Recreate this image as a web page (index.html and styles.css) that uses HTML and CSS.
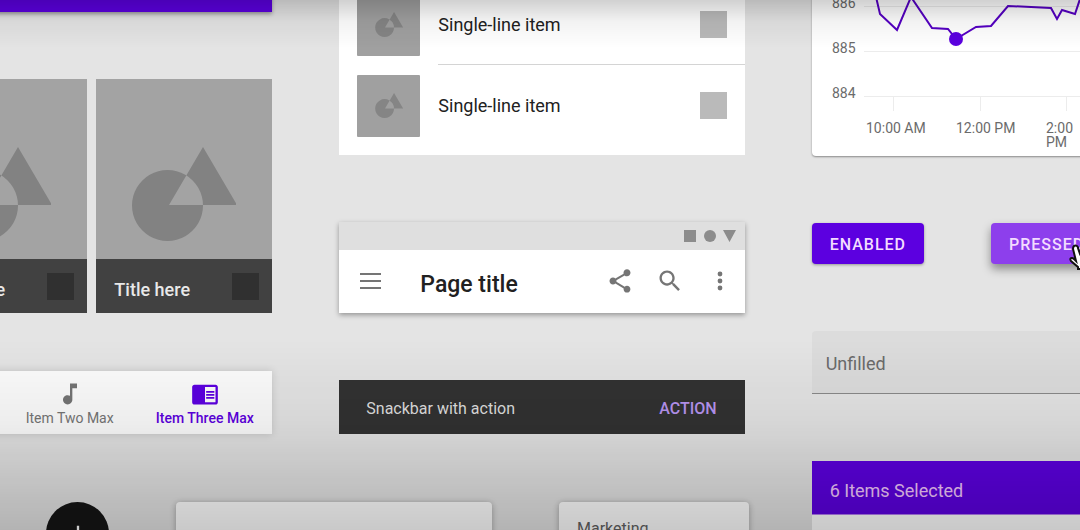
FILE: index.html
```html
<!DOCTYPE html>
<html lang="en">
<head>
  <meta charset="UTF-8">
  <meta name="viewport" content="width=device-width, initial-scale=1.0">
  <title>Component Board</title>
  <link rel="stylesheet" href="styles.css">
</head>
<body>

<!-- Shared placeholder art -->
<svg class="defs" width="0" height="0" aria-hidden="true">
  <symbol id="shapes" viewBox="0 0 104 94">
    <path fill-rule="evenodd" d="M35.500 23a35.500 35.500 0 1 0 .01 0ZM71 0 37 58h68Z"/>
  </symbol>
</svg>

<main class="board">

  <!-- Left column -->
  <div class="column">
    <div class="banner"></div>

    <div class="tiles">
      <figure class="tile">
        <div class="tile-image"><svg><use href="#shapes"/></svg></div>
        <figcaption>Title here <span class="tile-box"></span></figcaption>
      </figure>
      <figure class="tile">
        <div class="tile-image"><svg><use href="#shapes"/></svg></div>
        <figcaption>Title here <span class="tile-box"></span></figcaption>
      </figure>
    </div>

    <nav class="bottom-nav">
      <a href="#one"></a>
      <a href="#two">
        <svg width="28" height="28" viewBox="0 0 24 24"><path d="M12 3v10.550c-.59-.34-1.270-.55-2-.55-2.210 0-4 1.790-4 4s1.790 4 4 4 4-1.790 4-4V7h4V3h-6z"/></svg>
        Item Two Max
      </a>
      <a href="#three" class="selected">
        <svg width="28" height="28" viewBox="0 0 24 24"><path d="M21 4H3c-1.100 0-2 .9-2 2v13c0 1.100.9 2 2 2h18c1.100 0 2-.9 2-2V6c0-1.100-.9-2-2-2zm0 15h-9V6h9v13zm-1-9.500h-7V11h7zm0 2.500h-7v1.500h7zm0 2.500h-7V16h7z"/></svg>
        Item Three Max
      </a>
    </nav>
  </div>

  <!-- Middle column -->
  <div class="column">
    <ul class="list">
      <li>
        <span class="thumb"><svg><use href="#shapes"/></svg></span>
        <span class="list-text">Single-line item <span class="list-box"></span></span>
      </li>
      <li>
        <span class="thumb"><svg><use href="#shapes"/></svg></span>
        <span class="list-text">Single-line item <span class="list-box"></span></span>
      </li>
    </ul>

    <header class="app-bar">
      <div class="status-bar">
        <svg width="52" height="12" viewBox="0 0 52 12"><path d="M0 0h12v12H0zM39 0h13l-6.500 12z"/><circle cx="26" cy="6" r="6"/></svg>
      </div>
      <div class="toolbar">
        <button class="icon-button" aria-label="Menu">
          <svg width="28" height="28" viewBox="0 0 28 28"><path d="M4 6h21v2H4zM4 13h21v2H4zM4 20h21v2H4z"/></svg>
        </button>
        <h1>Page title</h1>
        <button class="icon-button" aria-label="Share">
          <svg width="28" height="28" viewBox="0 0 24 24"><path d="M18 16.080c-.76 0-1.440.3-1.960.77L8.910 12.700c.05-.23.09-.46.09-.7s-.04-.47-.09-.7l7.050-4.110c.54.5 1.250.81 2.040.81 1.660 0 3-1.340 3-3s-1.340-3-3-3-3 1.340-3 3c0 .24.04.47.09.7L8.040 9.810C7.500 9.310 6.790 9 6 9c-1.660 0-3 1.340-3 3s1.340 3 3 3c.79 0 1.500-.31 2.040-.81l7.120 4.160c-.05.21-.08.43-.08.65 0 1.610 1.310 2.920 2.920 2.920s2.920-1.310 2.920-2.920-1.310-2.920-2.920-2.920z"/></svg>
        </button>
        <button class="icon-button" aria-label="Search">
          <svg width="28" height="28" viewBox="0 0 24 24"><path d="M15.500 14h-.79l-.28-.27C15.410 12.590 16 11.110 16 9.500 16 5.910 13.090 3 9.500 3S3 5.910 3 9.500 5.910 16 9.500 16c1.610 0 3.090-.59 4.230-1.570l.27.28v.79l5 4.990L20.490 19l-4.990-5zm-6 0C7.010 14 5 11.990 5 9.500S7.010 5 9.500 5 14 7.010 14 9.500 11.990 14 9.500 14z"/></svg>
        </button>
        <button class="icon-button" aria-label="More">
          <svg width="28" height="28" viewBox="0 0 28 28"><circle cx="14" cy="7" r="2.400"/><circle cx="14" cy="14" r="2.400"/><circle cx="14" cy="21" r="2.400"/></svg>
        </button>
      </div>
    </header>

    <div class="snackbar">
      <span>Snackbar with action</span>
      <button>ACTION</button>
    </div>
  </div>

  <!-- Right column -->
  <div class="column column-right">
    <div class="chart">
      <svg width="405" height="171" viewBox="0 0 405 171">
        <path class="chart-grid" d="M52 22.500h353M52 67.500h353M52 112.500h353M81.500 112v15M168.500 112v15M254.500 112v15"/>
        <path class="chart-line" d="M61 0l7 30 17 16 14-33 21 31 16 1 8 10 20-12 15-1 17-20 43 2 6 11 5-9 13 4 10-30"/>
        <circle cx="144" cy="55" r="7"/>
        <text x="20" y="24">886</text>
        <text x="20" y="69">885</text>
        <text x="20" y="114">884</text>
        <text x="54" y="149">10:00 AM</text>
        <text x="144" y="149">12:00 PM</text>
        <text x="234" y="149">2:00<tspan x="234" dy="14">PM</tspan></text>
      </svg>
    </div>

    <div class="buttons">
      <button class="button">ENABLED</button>
      <div class="pressed-wrap">
        <button class="button pressed">PRESSED</button>
        <svg class="cursor" width="24" height="28" viewBox="0 0 24 28"><path d="M5 2c2-1 4 0 4 2l2 6c1-1 3-1 4 1 2-1 4 0 4 2 2-1 4 1 4 3v5l-3 4H9v-2L2 17c-2-3 1-4 3-2l2 2L4 5c0-1 0-2 1-3z"/></svg>
      </div>
    </div>

    <input class="text-field" type="text" placeholder="Unfilled" aria-label="Unfilled">

    <div class="selection">
      <div class="selection-head">6 Items Selected</div>
      <div class="selection-body"></div>
    </div>
  </div>

  <!-- Bottom row, under the left and middle columns -->
  <div class="bottom-row">
    <button class="fab" aria-label="Add">
      <svg width="28" height="28" viewBox="0 0 24 24"><path d="M19 13h-6v6h-2v-6H5v-2h6V5h2v6h6v2z"/></svg>
    </button>
    <div class="card card-wide"></div>
    <div class="card card-menu">Marketing</div>
  </div>

</main>

</body>
</html>
```
FILE: styles.css
```css
* {
  box-sizing: border-box;
}
body {
  margin: 0;
  height: 100vh;
  overflow: hidden;
  background-color: #e4e4e4;
  color: #212121;
  font-family: Roboto, sans-serif;
  font-size: 18px;
}
/* Shade along the top and bottom of the window */
body::after {
  content: "";
  position: fixed;
  inset: 0;
  pointer-events: none;
  background: linear-gradient(rgba(0, 0, 0, 0.18), rgba(0, 0, 0, 0.05) 4%, transparent 9%, transparent 64%, rgba(0, 0, 0, 0.06) 80%, rgba(0, 0, 0, 0.17) 94%, rgba(0, 0, 0, 0.21));
}
button {
  border: none;
  background: none;
  padding: 0;
  font-family: inherit;
  cursor: pointer;
}
.defs {
  position: absolute;
}

/* The board runs past both sides of the window */
.board {
  display: grid;
  grid-template-columns: repeat(3, minmax(0, 1fr));
  grid-template-rows: auto 1fr;
  gap: 68px 67px;
  margin: -16px -137px 0 -133px;
}
.column {
  display: flex;
  flex-direction: column;
  gap: 67px;
}
.column-right {
  grid-column: 3;
  grid-row: 1 / 3;
}

/* Left column */
.banner {
  height: 28px;
  background-color: #5c00e0;
  box-shadow: 0 2px 4px rgba(0, 0, 0, 0.35);
}
.tiles {
  display: flex;
  justify-content: flex-end;
  gap: 9px;
}
.tile {
  width: 176px;
  margin: 0;
  flex: none;
}
.tile-image {
  height: 180px;
  padding: 68px 36px 0;
  background-color: #a3a3a3;
}
.tile-image svg {
  display: block;
  width: 104px;
  height: 94px;
  fill: #828282;
}
.tile figcaption {
  display: flex;
  justify-content: space-between;
  align-items: center;
  height: 54px;
  padding: 6px 13px 0 18px;
  background-color: #414141;
  color: #e8e8e8;
  font-weight: 500;
}
.tile-box {
  width: 27px;
  height: 27px;
  margin-top: -6px;
  background-color: #303030;
}
.bottom-nav {
  display: flex;
  height: 63px;
  margin-top: -9px;
  background-color: #fcfcfc;
  box-shadow: 0 0 8px rgba(0, 0, 0, 0.15);
}
.bottom-nav a {
  display: flex;
  flex: 1;
  flex-direction: column;
  align-items: center;
  padding-top: 9px;
  color: #757575;
  fill: #757575;
  font-size: 14px;
  line-height: 20px;
  text-decoration: none;
}
.bottom-nav .selected {
  color: #5c00e0;
  fill: #5c00e0;
  font-weight: 500;
}

/* Middle column */
.list {
  margin: 0;
  padding: 0 0 9px;
  list-style: none;
  background-color: #fff;
}
.list li {
  display: flex;
  align-items: center;
  height: 81px;
  padding-left: 18px;
}
.thumb {
  display: flex;
  align-items: center;
  justify-content: center;
  width: 63px;
  height: 62px;
  border-radius: 1px;
  background-color: #a0a0a0;
}
.thumb svg {
  width: 28px;
  height: 25px;
  fill: #858585;
}
.list-text {
  display: flex;
  flex: 1;
  align-items: center;
  justify-content: space-between;
  height: 81px;
  margin-left: 18px;
  padding-right: 18px;
  border-bottom: 1px solid #d4d4d4;
}
.list li:last-child .list-text {
  border-bottom: none;
}
.list-box {
  width: 27px;
  height: 27px;
  background-color: #bababa;
}
.app-bar {
  background-color: #fff;
  box-shadow: 0 2px 5px rgba(0, 0, 0, 0.35);
}
.status-bar {
  display: flex;
  align-items: center;
  justify-content: flex-end;
  height: 28px;
  padding-right: 9px;
  background-color: #dfdfdf;
  fill: #8c8c8c;
}
.toolbar {
  display: flex;
  align-items: center;
  gap: 22px;
  height: 63px;
  padding: 0 11px 1px 17px;
}
.toolbar h1 {
  flex: 1;
  margin: 6px 0 0 14px;
  font-size: 23px;
  font-weight: 500;
}
.icon-button {
  display: flex;
  fill: #757575;
}
.snackbar {
  display: flex;
  align-items: center;
  justify-content: space-between;
  height: 54px;
  padding: 2px 28px 0 27px;
  background-color: #323232;
  color: #dedede;
  font-size: 16px;
}
.snackbar button {
  color: #b794f0;
  font-size: 16px;
  font-weight: 500;
}

/* Right column */
.chart {
  height: 172px;
  border-radius: 4px;
  background-color: #fff;
  box-shadow: 0 1px 2px rgba(0, 0, 0, 0.4);
  overflow: hidden;
}
.chart svg {
  display: block;
  fill: #5c00e0;
}
.chart text {
  fill: #6b6b6b;
  font-size: 14px;
}
.chart-grid {
  fill: none;
  stroke: #ececec;
}
.chart-line {
  fill: none;
  stroke: #5600c4;
  stroke-width: 2;
}
.buttons {
  display: flex;
  gap: 67px;
}
.button {
  height: 41px;
  padding: 2px 18px 0;
  border-radius: 4px;
  background-color: #5c00e0;
  box-shadow: 0 1px 3px rgba(0, 0, 0, 0.35);
  color: #f3dcff;
  font-size: 16px;
  font-weight: 500;
  letter-spacing: 1px;
}
.pressed-wrap {
  position: relative;
}
.button.pressed {
  background-color: #8d3fec;
  box-shadow: 0 5px 10px rgba(0, 0, 0, 0.4);
}
.cursor {
  position: absolute;
  left: 78px;
  top: 21px;
  fill: #fff;
  stroke: #111;
  stroke-width: 2;
}
.text-field {
  height: 63px;
  padding: 2px 14px 0;
  border: none;
  border-bottom: 1px solid #8a8a8a;
  border-radius: 4px 4px 0 0;
  background-color: #dcdcdc;
  font-family: inherit;
  font-size: 18px;
}
.text-field::placeholder {
  color: #6b6b6b;
}
.selection-head {
  height: 54px;
  padding: 6px 18px 0;
  border-bottom: 1px solid #b37cf0;
  background-color: #5c00e0;
  color: #f3c8ff;
  line-height: 48px;
}
.selection-body {
  height: 108px;
  background-color: #fff;
}

/* Bottom row */
.bottom-row {
  display: flex;
  grid-column: 1 / 3;
  grid-row: 2;
  gap: 67px;
  padding-left: 179px;
}
.fab {
  display: flex;
  flex: none;
  align-items: center;
  justify-content: center;
  width: 63px;
  height: 63px;
  border-radius: 50%;
  background-color: #161616;
  fill: #fff;
}
.card {
  flex: none;
  height: 108px;
  border-radius: 4px;
  background-color: #fff;
  box-shadow: 0 1px 6px rgba(0, 0, 0, 0.3);
}
.card-wide {
  width: 316px;
}
.card-menu {
  width: 190px;
  padding: 17px 18px;
  color: #616161;
  font-size: 16px;
}
```
